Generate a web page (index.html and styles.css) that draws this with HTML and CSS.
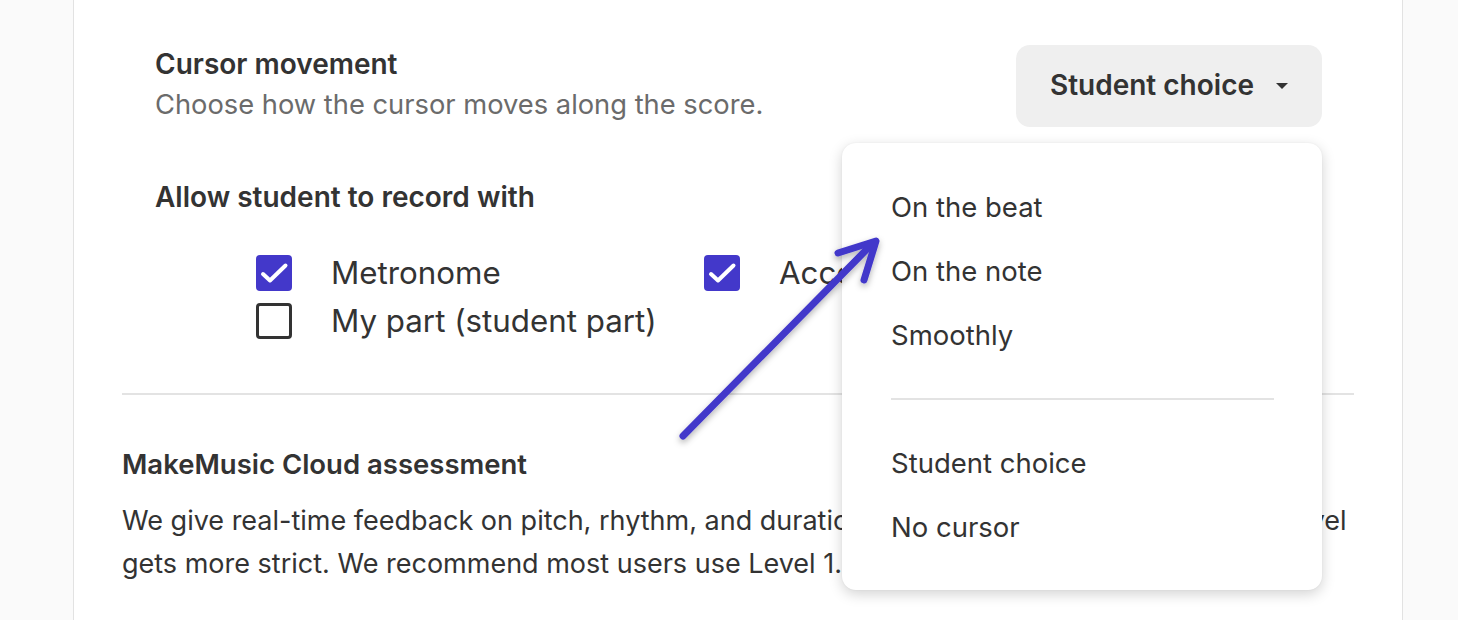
FILE: index.html
```html
<!DOCTYPE html>
<html lang="en">
<head>
<meta charset="utf-8">
<title>Cursor settings</title>
<link rel="stylesheet" href="styles.css">
</head>
<body>
<div class="page">
  <div class="card">
    <div class="settings">
      <div class="setting-row">
        <div class="setting-text">
          <div class="setting-title">Cursor movement</div>
          <div class="setting-desc">Choose how the cursor moves along the score.</div>
        </div>
        <button class="select-btn">Student choice <span class="caret"></span></button>
      </div>
      <div class="record">
        <div class="setting-title">Allow student to record with</div>
        <div class="checks">
          <label class="check"><span class="box checked"><svg viewBox="0 0 36 36"><path d="M7 19 L14 25.5 L29.5 10.5"/></svg></span>Metronome</label>
          <label class="check"><span class="box checked"><svg viewBox="0 0 36 36"><path d="M7 19 L14 25.5 L29.5 10.5"/></svg></span>Accompaniment</label>
          <label class="check"><span class="box"></span>My part (student part)</label>
        </div>
      </div>
    </div>
    <hr class="divider">
    <div class="assessment">
      <div class="assess-title">MakeMusic Cloud assessment</div>
      <p class="assess-text">We give real-time feedback on pitch, rhythm, and duration. There are five levels, and every level gets more strict. We recommend most users use Level 1.</p>
    </div>
  </div>

  <div class="menu">
    <div class="menu-item">On the beat</div>
    <div class="menu-item">On the note</div>
    <div class="menu-item">Smoothly</div>
    <div class="menu-sep"></div>
    <div class="menu-item">Student choice</div>
    <div class="menu-item">No cursor</div>
  </div>

  <svg class="annot" viewBox="0 0 1458 620" width="1458" height="620">
    <defs>
      <filter id="sh" x="-20%" y="-20%" width="140%" height="140%">
        <feDropShadow dx="0" dy="3" stdDeviation="3" flood-color="#000" flood-opacity="0.3"/>
      </filter>
    </defs>
    <g filter="url(#sh)" fill="none" stroke="#4338ca" stroke-width="7" stroke-linecap="round" stroke-linejoin="round">
      <path d="M683 436 L873 243"/>
      <path d="M838 253 L876 241 L864 280"/>
    </g>
  </svg>
</div>
</body>
</html>
```

FILE: styles.css
```css
* { box-sizing: border-box; }
html, body { margin: 0; padding: 0; }
body {
  background: #fafafa;
  font-family: Inter, "Noto Sans", sans-serif;
  color: #333;
  width: 1458px;
  height: 620px;
  overflow: hidden;
}
.page {
  position: relative;
  height: 620px;
  padding-left: 73px;
  padding-right: 55px;
}
.card {
  background: #fff;
  border-left: 1px solid #e2e2e2;
  border-right: 1px solid #e2e2e2;
  height: 620px;
}
.settings {
  padding: 44px 80px 0 81px;
}
.setting-row {
  display: flex;
  justify-content: space-between;
  align-items: flex-start;
}
.setting-title {
  font-size: 28px;
  font-weight: 600;
  line-height: 40px;
  color: #333;
}
.setting-desc {
  font-size: 27.3px;
  line-height: 42px;
  color: #6b6b6b;
}
.select-btn {
  font-family: inherit;
  background: #efefef;
  border: none;
  border-radius: 14px;
  width: 306px;
  height: 82px;
  margin-top: 1px;
  font-size: 28px;
  font-weight: 600;
  color: #333;
  display: flex;
  align-items: center;
  justify-content: center;
  gap: 22px;
  padding: 0 0 2px 0;
}
.caret {
  width: 0; height: 0;
  border-left: 6px solid transparent;
  border-right: 6px solid transparent;
  border-top: 6px solid #333;
  margin-top: 2px;
}
.record {
  margin-top: 50px;
}
.checks {
  display: grid;
  grid-template-columns: 448px 1fr;
  row-gap: 12px;
  padding-left: 101px;
  margin-top: 38px;
}
.check {
  display: flex;
  align-items: center;
  gap: 39px;
  font-size: 31.3px;
  line-height: 36px;
  color: #333;
  white-space: nowrap;
}
.box {
  width: 36px; height: 36px;
  border: 3.5px solid #333;
  border-radius: 4px;
  flex: none;
}
.box.checked {
  border: none;
  background: #4338ca;
}
.box svg {
  display: block;
  width: 36px; height: 36px;
  fill: none;
  stroke: #fff;
  stroke-width: 4;
  stroke-linecap: round;
  stroke-linejoin: round;
}
.divider {
  border: none;
  border-top: 2px solid #e3e3e3;
  margin: 54px 48px 0 48px;
}
.assessment {
  padding: 49px 48px 0 48px;
}
.assess-title {
  font-size: 27.5px;
  font-weight: 600;
  line-height: 40px;
}
.assess-text {
  margin: 15px 0 0 0;
  font-size: 27px;
  line-height: 43px;
  color: #333;
}
.menu {
  position: absolute;
  left: 842px;
  top: 143px;
  width: 480px;
  height: 447px;
  background: #fff;
  border-radius: 14px;
  box-shadow: 0 4px 14px rgba(0,0,0,0.18), 0 0 2px rgba(0,0,0,0.06);
  padding: 32px 48px 0 49px;
}
.menu-item {
  font-size: 27.5px;
  line-height: 64px;
  color: #333;
}
.menu-sep {
  border-top: 2px solid #e3e3e3;
  margin: 31px 0 31px 0;
}
.annot {
  position: absolute;
  left: 0;
  top: 0;
  pointer-events: none;
}
```
